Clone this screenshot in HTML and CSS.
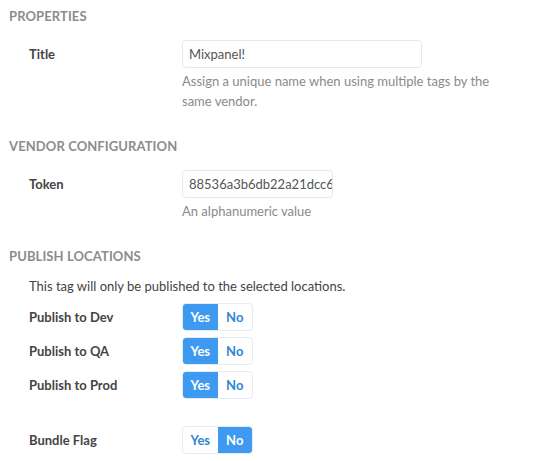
FILE: index.html
```html
<!DOCTYPE html>
<html>
<head>
<meta charset="utf-8">
<link rel="stylesheet" href="styles.css">
</head>
<body>
<div class="page">
  <section class="section">
    <h2 class="heading">PROPERTIES</h2>
    <div class="row">
      <div class="label">Title</div>
      <div class="field">
        <div class="input wide">Mixpanel!</div>
        <p class="help">Assign a unique name when using multiple tags by the same vendor.</p>
      </div>
    </div>
  </section>
  <section class="section">
    <h2 class="heading">VENDOR CONFIGURATION</h2>
    <div class="row">
      <div class="label">Token</div>
      <div class="field">
        <div class="input narrow">88536a3b6db22a21dcc6f3e0</div>
        <p class="help">An alphanumeric value</p>
      </div>
    </div>
  </section>
  <section class="section">
    <h2 class="heading">PUBLISH LOCATIONS</h2>
    <p class="intro">This tag will only be published to the selected locations.</p>
    <div class="toggles">
      <div class="trow">
        <div class="label">Publish to Dev</div>
        <div class="switch"><span class="opt on">Yes</span><span class="opt">No</span></div>
      </div>
      <div class="trow">
        <div class="label">Publish to QA</div>
        <div class="switch"><span class="opt on">Yes</span><span class="opt">No</span></div>
      </div>
      <div class="trow">
        <div class="label">Publish to Prod</div>
        <div class="switch"><span class="opt on">Yes</span><span class="opt">No</span></div>
      </div>
    </div>
    <div class="row bundle">
      <div class="label">Bundle Flag</div>
      <div class="field">
        <div class="switch"><span class="opt">Yes</span><span class="opt on">No</span></div>
        <p class="help">This flag determines if the tag code is bundled into the main library.</p>
      </div>
    </div>
  </section>
</div>
</body>
</html>
```
FILE: styles.css
```css
html, body {
  margin: 0;
  padding: 0;
  background: #ffffff;
  overflow: hidden;
}
body {
  font-family: Lato, "Open Sans", Arial, sans-serif;
  font-size: 13px;
  color: #444;
  width: 545px;
  height: 461px;
}
.page {
  padding: 8px 0 0 9px;
}
.heading {
  margin: 0;
  font-size: 13px;
  font-weight: 700;
  color: #8c8c8c;
  line-height: 16px;
  letter-spacing: 0.1px;
}
.section {
  margin-bottom: 0;
}
.row {
  display: flex;
  align-items: flex-start;
  padding-left: 20px;
}
.label {
  width: 153px;
  font-weight: 700;
  color: #444;
  font-size: 13px;
}
.row > .label {
  line-height: 28px;
}
.field {
  display: flex;
  flex-direction: column;
}
.input {
  box-sizing: border-box;
  height: 28px;
  border: 1px solid #e3e9f0;
  border-radius: 4px;
  padding: 0 6px;
  line-height: 26px;
  color: #555;
  white-space: nowrap;
  overflow: hidden;
}
.input.wide { width: 240px; }
.input.narrow { width: 151px; }
.help {
  margin: 3px 0 0;
  color: #8a8a8a;
  line-height: 20px;
  width: 340px;
}
.section:nth-child(1) .row { margin-top: 16px; }
.section:nth-child(1) { height: 130px; }
.section:nth-child(2) .row { margin-top: 16px; }
.section:nth-child(2) { height: 110px; }
.intro {
  margin: 14px 0 0 20px;
  line-height: 16px;
}
.toggles {
  display: flex;
  flex-direction: column;
  gap: 6px;
  margin-top: 9px;
}
.trow {
  display: flex;
  align-items: center;
  padding-left: 20px;
}
.switch {
  display: flex;
  box-sizing: border-box;
  width: 71px;
  height: 28px;
  border: 1px solid #e6ebf1;
  border-radius: 4px;
  overflow: hidden;
}
.opt {
  flex: 1;
  text-align: center;
  line-height: 26px;
  font-weight: 700;
  color: #2f87d3;
  font-size: 13px;
}
.opt.on {
  background: #3d9af0;
  color: #fff;
}
.row.bundle { margin-top: 27px; }
.bundle .help { margin-top: 5px; }
```
